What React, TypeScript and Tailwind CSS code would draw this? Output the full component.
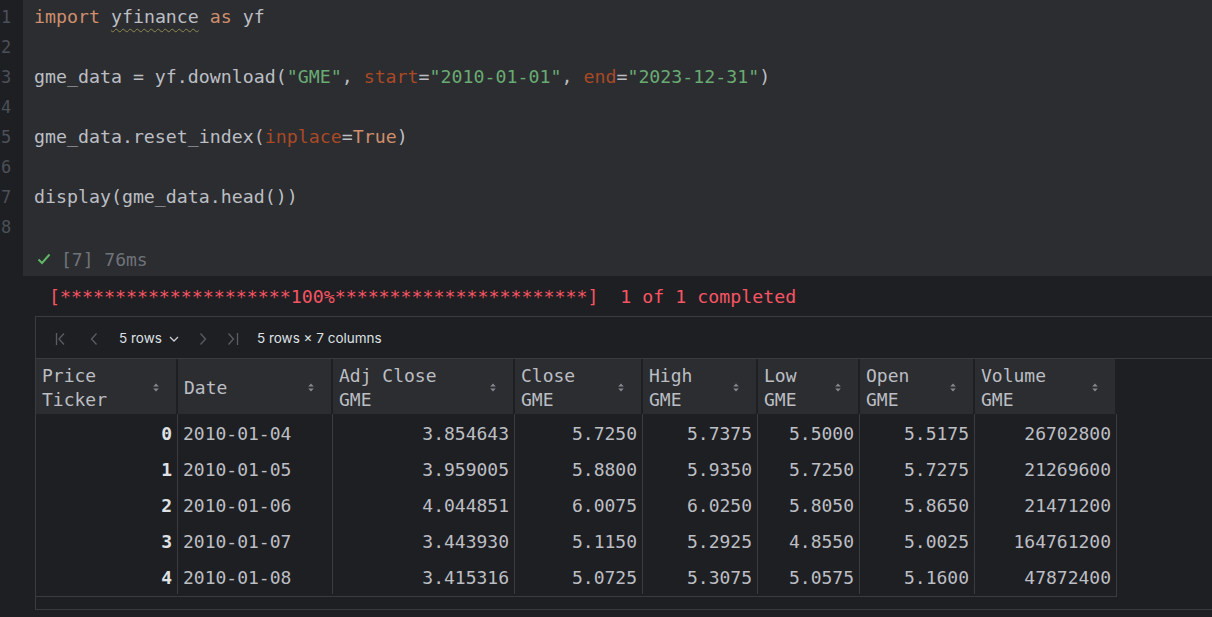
import React from "react";

const mono = { fontFamily: '"DejaVu Sans Mono", "Liberation Mono", monospace' };
const sans = { fontFamily: 'Inter, "Noto Sans", sans-serif' };

const K = ({ c }: { c: string }) => <span className="text-[#cf8e6d]">{c}</span>;
const S = ({ c }: { c: string }) => <span className="text-[#6aab73]">{c}</span>;
const N = ({ c }: { c: string }) => <span className="text-[#aa4926]">{c}</span>;

const lines: React.ReactNode[] = [
  <>
    <K c="import" />{" "}
    <span className="underline decoration-wavy decoration-[#8f8a52] decoration-1 underline-offset-[5px]">yfinance</span>{" "}
    <K c="as" /> yf
  </>,
  <></>,
  <>
    gme_data = yf.download(<S c={'"GME"'} />, <N c="start" />=<S c={'"2010-01-01"'} />, <N c="end" />=
    <S c={'"2023-12-31"'} />)
  </>,
  <></>,
  <>
    gme_data.reset_index(<N c="inplace" />=<K c="True" />)
  </>,
  <></>,
  <>display(gme_data.head())</>,
  <></>,
];

const cols = [
  { w: 142, h1: "Price", h2: "Ticker" },
  { w: 155, h1: "Date", h2: "" },
  { w: 182, h1: "Adj Close", h2: "GME" },
  { w: 128, h1: "Close", h2: "GME" },
  { w: 115, h1: "High", h2: "GME" },
  { w: 102, h1: "Low", h2: "GME" },
  { w: 115, h1: "Open", h2: "GME" },
  { w: 142, h1: "Volume", h2: "GME" },
];

const rows = [
  ["0", "2010-01-04", "3.854643", "5.7250", "5.7375", "5.5000", "5.5175", "26702800"],
  ["1", "2010-01-05", "3.959005", "5.8800", "5.9350", "5.7250", "5.7275", "21269600"],
  ["2", "2010-01-06", "4.044851", "6.0075", "6.0250", "5.8050", "5.8650", "21471200"],
  ["3", "2010-01-07", "3.443930", "5.1150", "5.2925", "4.8550", "5.0025", "164761200"],
  ["4", "2010-01-08", "3.415316", "5.0725", "5.3075", "5.0575", "5.1600", "47872400"],
];

const SortIcon = () => (
  <svg width="8" height="11" viewBox="0 0 8 11" className="shrink-0">
    <path d="M4 1.5 L6.8 4.5 H1.2 Z" fill="#868990" />
    <path d="M4 9.5 L6.8 6.5 H1.2 Z" fill="#868990" />
  </svg>
);

export default function App() {
  return (
    <div className="w-[1212px] h-[617px] overflow-hidden bg-[#1e1f22] flex flex-col" style={mono}>
      {/* code cell */}
      <div className="flex h-[276px] shrink-0">
        <div className="w-[23px] shrink-0 bg-[#1e1f22] pt-[2px]">
          {lines.map((_, i) => (
            <div key={i} className="h-[30px] leading-[30px] text-[17px] text-[#4b5059] pl-[1px]">
              {i + 1}
            </div>
          ))}
        </div>
        <div className="flex-1 bg-[#2b2d30] flex flex-col">
          <div className="pt-[2px] pl-[11px] text-[18.25px] text-[#bcbec4] whitespace-pre">
            {lines.map((l, i) => (
              <div key={i} className="h-[30px] leading-[30px]">
                {l}
              </div>
            ))}
          </div>
          <div className="flex items-center h-[34px] pl-[14px] text-[18px] text-[#6f737a]">
            <svg width="14" height="12" viewBox="0 0 14 12" className="mr-[10px]">
              <path d="M1.5 6.5 L5 10 L12.5 1.5" stroke="#5fb865" strokeWidth="2" fill="none" />
            </svg>
            <span>[7] 76ms</span>
          </div>
        </div>
      </div>

      {/* output */}
      <div className="flex flex-1">
        <div className="w-[23px] shrink-0" />
        <div className="flex-1 flex flex-col pt-[6px]">
          <div className="h-[30px] leading-[30px] pl-[26px] text-[18.25px] text-[#f75464] whitespace-pre">
            {"[*********************100%***********************]  1 of 1 completed"}
          </div>
          <div className="ml-[12px] mt-[4px] mr-[-20px] border-l border-t border-b border-[#393b40] flex flex-col">
            {/* toolbar */}
            <div className="h-[42px] pt-[2px] flex items-center text-[13.5px] text-[#dfe1e5] border-b border-[#393b40]" style={sans}>
              <svg width="12" height="14" viewBox="0 0 12 14" className="ml-[19px]">
                <path d="M1.5 1 V13" stroke="#5a5d63" strokeWidth="1.3" />
                <path d="M9 1.5 L4 7 L9 12.5" stroke="#5a5d63" strokeWidth="1.3" fill="none" />
              </svg>
              <svg width="10" height="14" viewBox="0 0 10 14" className="ml-[22px]">
                <path d="M7.5 1.5 L2.5 7 L7.5 12.5" stroke="#5a5d63" strokeWidth="1.3" fill="none" />
              </svg>
              <span className="ml-[20px]">5 rows</span>
              <svg width="10" height="8" viewBox="0 0 10 8" className="ml-[7px]">
                <path d="M1 2 L5 6 L9 2" stroke="#c9ccd1" strokeWidth="1.3" fill="none" />
              </svg>
              <svg width="10" height="14" viewBox="0 0 10 14" className="ml-[19px]">
                <path d="M2.5 1.5 L7.5 7 L2.5 12.5" stroke="#5a5d63" strokeWidth="1.3" fill="none" />
              </svg>
              <svg width="13" height="14" viewBox="0 0 13 14" className="ml-[19px]">
                <path d="M1.5 1.5 L6.5 7 L1.5 12.5" stroke="#5a5d63" strokeWidth="1.3" fill="none" />
                <path d="M10.5 1 V13" stroke="#5a5d63" strokeWidth="1.3" />
              </svg>
              <span className="ml-[17px]">5 rows × 7 columns</span>
            </div>

            {/* table */}
            <div className="flex flex-col w-[1081px] border-b border-r border-[#393b40] text-[18px]">
              <div className="flex h-[55px] bg-[#1e1f22]">
                {cols.map((c, i) => (
                  <div
                    key={i}
                    style={{ width: c.w }}
                    className="shrink-0 bg-[#2b2d30] border-r-2 border-[#1e1f22] flex items-center pt-[2px] pl-[6px] pr-[16px] text-[#bcbec4]"
                  >
                    <div className="flex-1 leading-[24px]">
                      <div>{c.h1}</div>
                      {c.h2 && <div>{c.h2}</div>}
                    </div>
                    <SortIcon />
                  </div>
                ))}
              </div>
              {rows.map((r, ri) => (
                <div key={ri} className="flex h-[36px]">
                  {r.map((v, ci) => (
                    <div
                      key={ci}
                      style={{ width: cols[ci].w }}
                      className={
                        "shrink-0 border-r border-[#393b40] flex items-center pt-[2px] " +
                        (ci === 1 ? "pl-[5px] text-[#bcbec4]" : "justify-end pr-[5px] ") +
                        (ci === 0 ? "text-[#dfe1e5] font-bold" : ci === 1 ? "" : "text-[#bcbec4]")
                      }
                    >
                      {v}
                    </div>
                  ))}
                </div>
              ))}
              <div className="h-[2px]" />
            </div>
            <div className="h-[12px]" />
          </div>
        </div>
      </div>
    </div>
  );
}
